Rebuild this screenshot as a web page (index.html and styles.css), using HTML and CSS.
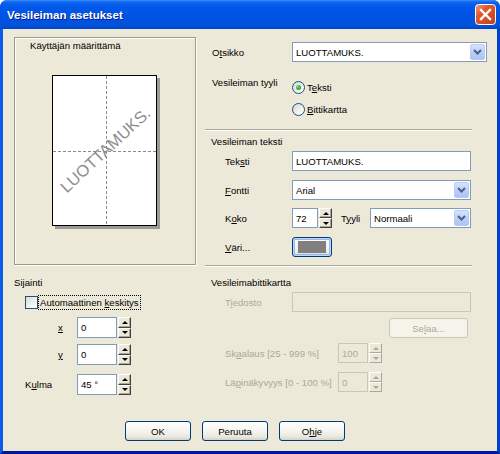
FILE: index.html
```html
<!DOCTYPE html>
<html lang="fi">
<head>
    <meta charset="UTF-8">
    <title>Vesileiman asetukset</title>
    <link rel="stylesheet" href="styles.css">
</head>
<body>

<div class="window">
    <div class="titlebar">
        <span class="title">Vesileiman asetukset</span>
        <button class="close" type="button" aria-label="Sulje">
            <svg width="21" height="21" viewBox="0 0 21 21">
                <defs>
                    <linearGradient id="closeBg" x1="0" y1="0" x2="1" y2="1">
                        <stop offset="0" stop-color="#f0a084"/>
                        <stop offset="0.35" stop-color="#e3582f"/>
                        <stop offset="1" stop-color="#c4401b"/>
                    </linearGradient>
                </defs>
                <rect x="0.5" y="0.5" width="20" height="20" rx="3" fill="url(#closeBg)" stroke="#fff"/>
                <path d="M6 6 L15 15 M15 6 L6 15" stroke="#fff" stroke-width="2.4" stroke-linecap="square"/>
            </svg>
        </button>
    </div>

    <div class="dialog">
        <div class="columns">
            <div class="left">
                <div class="preview">
                    <p class="preview-caption">Käyttäjän määrittämä</p>
                    <div class="paper">
                        <span class="mark">LUOTTAMUKS.</span>
                    </div>
                </div>

                <p class="group-title">Sijainti</p>
                <div class="check-row">
                    <span class="checkbox"></span>
                    <span class="focus">Automaattinen <u>k</u>eskitys</span>
                </div>
                <div class="pos-row first">
                    <span class="pos-label short"><u>x</u></span>
                    <div class="spin">
                        <input type="text" value="0">
                        <span class="spin-btns"><span class="up"></span><span class="down"></span></span>
                    </div>
                </div>
                <div class="pos-row second">
                    <span class="pos-label short"><u>y</u></span>
                    <div class="spin">
                        <input type="text" value="0">
                        <span class="spin-btns"><span class="up"></span><span class="down"></span></span>
                    </div>
                </div>
                <div class="pos-row third">
                    <span class="pos-label">K<u>u</u>lma</span>
                    <div class="spin">
                        <input type="text" value="45 °">
                        <span class="spin-btns"><span class="up"></span><span class="down"></span></span>
                    </div>
                </div>
            </div>

            <div class="right">
                <div class="row otsikko">
                    <span class="lbl top">O<u>t</u>sikko</span>
                    <div class="combo wide">
                        <span class="value">LUOTTAMUKS.</span>
                        <span class="arrow"><svg width="9" height="6" viewBox="0 0 9 6"><path d="M1 1 L4.5 4.5 L8 1" fill="none" stroke="#4d6185" stroke-width="2"/></svg></span>
                    </div>
                </div>

                <div class="style-block">
                    <span class="lbl top">Vesileiman tyyli</span>
                    <div class="radios">
                        <div class="radio-row"><span class="radio checked"></span><span>T<u>e</u>ksti</span></div>
                        <div class="radio-row"><span class="radio"></span><span><u>B</u>ittikartta</span></div>
                    </div>
                </div>

                <div class="sep first-sep"></div>

                <p class="heading">Vesileiman teksti</p>
                <div class="row first-field">
                    <span class="lbl">Tek<u>s</u>ti</span>
                    <input class="text" type="text" value="LUOTTAMUKS.">
                </div>
                <div class="row fontti">
                    <span class="lbl"><u>F</u>ontti</span>
                    <div class="combo">
                        <span class="value">Arial</span>
                        <span class="arrow"><svg width="9" height="6" viewBox="0 0 9 6"><path d="M1 1 L4.5 4.5 L8 1" fill="none" stroke="#4d6185" stroke-width="2"/></svg></span>
                    </div>
                </div>
                <div class="row koko">
                    <span class="lbl">K<u>o</u>ko</span>
                    <div class="spin">
                        <input class="size" type="text" value="72">
                        <span class="spin-btns"><span class="up"></span><span class="down"></span></span>
                    </div>
                    <span class="tyyli-lbl">T<u>y</u>yli</span>
                    <div class="combo narrow">
                        <span class="value">Normaali</span>
                        <span class="arrow"><svg width="9" height="6" viewBox="0 0 9 6"><path d="M1 1 L4.5 4.5 L8 1" fill="none" stroke="#4d6185" stroke-width="2"/></svg></span>
                    </div>
                </div>
                <div class="row vari">
                    <span class="lbl"><u>V</u>äri...</span>
                    <button class="btn color-btn" type="button"><span class="swatch"></span></button>
                </div>

                <div class="sep second-sep"></div>

                <p class="heading bitmap-heading">Vesileimabittikartta</p>
                <div class="row first-field disabled">
                    <span class="lbl">T<u>i</u>edosto</span>
                    <input class="text" type="text" value="" disabled>
                </div>
                <div class="row browse">
                    <button class="btn browse-btn" type="button" disabled>Se<u>l</u>aa...</button>
                </div>
                <div class="row disabled scale">
                    <span class="lbl long">Sk<u>a</u>alaus [25 - 999 %]</span>
                    <div class="spin off">
                        <input class="num" type="text" value="100" disabled>
                        <span class="spin-btns"><span class="up"></span><span class="down"></span></span>
                    </div>
                </div>
                <div class="row disabled opacity">
                    <span class="lbl long">Lä<u>p</u>inäkyvyys [0 - 100 %]</span>
                    <div class="spin off">
                        <input class="num" type="text" value="0" disabled>
                        <span class="spin-btns"><span class="up"></span><span class="down"></span></span>
                    </div>
                </div>
            </div>
        </div>

        <div class="buttons">
            <button class="btn" type="button">OK</button>
            <button class="btn" type="button">Peruuta</button>
            <button class="btn" type="button">O<u>h</u>je</button>
        </div>
    </div>
</div>

</body>
</html>
```

FILE: styles.css
```css
* {
    box-sizing: border-box;
}
html, body {
    margin: 0;
    padding: 0;
    background: #fff;
}
body {
    font-family: 'Liberation Sans', Arial, sans-serif;
    font-size: 9.6px;
    color: #000;
}
p {
    margin: 0;
}
input, button {
    font-family: inherit;
    font-size: 9.6px;
    color: #000;
    margin: 0;
}

.window {
    width: 500px;
    height: 454px;
    display: flex;
    flex-direction: column;
    border-radius: 7px 7px 0 0;
    overflow: hidden;
    background: #0054e3;
}
.titlebar {
    height: 29px;
    flex: none;
    display: flex;
    align-items: center;
    justify-content: space-between;
    padding: 0 4px 0 7px;
    background: linear-gradient(#3d8ffd 0, #0f66f0 2px, #0059ea 6px, #0054e3 50%, #0052dd 85%, #0047c9 100%);
}
.title {
    color: #fff;
    font-weight: bold;
    font-size: 11.5px;
    text-shadow: 1px 1px #0b1f8c;
}
.close {
    width: 21px;
    height: 21px;
    padding: 0;
    border: none;
    background: none;
    display: block;
}
.close svg {
    display: block;
}

.dialog {
    flex: 1;
    background: #ece9d8;
    border-left: 3px solid #0b5ce8;
    border-right: 3px solid #0041cc;
    border-bottom: 3px solid #00169f;
    padding: 8px 10px 0 11px;
}
.columns {
    display: grid;
    grid-template-columns: 182px 282px;
    column-gap: 9px;
    align-items: start;
}

/* preview */
.preview {
    height: 228px;
    border: 1px solid #9d9a8b;
    box-shadow: inset 1px 1px 0 #fff, 1px 1px 0 #fff;
    padding-top: 2px;
}
.preview-caption {
    line-height: 12px;
    padding-left: 15px;
}
.paper {
    position: relative;
    width: 105px;
    height: 151px;
    margin: 23px 0 0 37px;
    background: #fff;
    border: 1px solid #000;
    box-shadow: 3px 3px 0 #9c9a94;
    overflow: hidden;
}
.paper::before {
    content: '';
    position: absolute;
    left: 53px;
    top: 0;
    bottom: 0;
    width: 1px;
    background: repeating-linear-gradient(to bottom, #8a8a8a 0 3px, transparent 3px 5px);
}
.paper::after {
    content: '';
    position: absolute;
    top: 75px;
    left: 0;
    right: 0;
    height: 1px;
    background: repeating-linear-gradient(to right, #8a8a8a 0 3px, transparent 3px 5px);
}
.mark {
    position: absolute;
    left: 50%;
    top: 50%;
    z-index: 1;
    font-size: 16.5px;
    line-height: 16px;
    color: #8c8c8c;
    white-space: nowrap;
    transform: translate(-50%, -58%) rotate(-43deg);
}

/* position group */
.group-title {
    line-height: 12px;
    margin-top: 12px;
}
.check-row {
    display: flex;
    align-items: center;
    height: 15px;
    margin-top: 6px;
    padding-left: 11px;
}
.checkbox {
    width: 13px;
    height: 13px;
    border: 1px solid #1c5180;
    background: linear-gradient(135deg, #dcdcd5, #f6f6f3 70%, #fff);
}
.focus {
    margin-left: 1px;
    padding: 0 1px;
    line-height: 13px;
    outline: 1px dotted #000;
}
.pos-row {
    display: flex;
    align-items: center;
    height: 21px;
}
.pos-row.first {
    margin-top: 7px;
}
.pos-row.second {
    margin-top: 6px;
}
.pos-row.third {
    margin-top: 9px;
}
.pos-label {
    width: 63px;
    padding-left: 11px;
}
.pos-label.short {
    padding-left: 44px;
}
.pos-row input {
    width: 40px;
    height: 21px;
}

/* shared controls */
.spin {
    display: flex;
    gap: 1px;
    height: 100%;
}
.spin input,
.text {
    border: 1px solid #7f9db9;
    background: #fff;
    padding: 0 3px;
    outline: none;
}
.spin-btns {
    width: 13px;
    display: flex;
    flex-direction: column;
}
.spin-btns span {
    flex: 1;
    display: flex;
    align-items: center;
    justify-content: center;
    background: #ece9d8;
    border: 1px solid;
    border-color: #fff #404040 #404040 #fff;
    box-shadow: inset -1px -1px 0 #aca899;
}
.spin-btns .up::before,
.spin-btns .down::before {
    content: '';
    border-left: 3px solid transparent;
    border-right: 3px solid transparent;
}
.spin-btns .up::before {
    border-bottom: 3px solid #000;
}
.spin-btns .down::before {
    border-top: 3px solid #000;
}
.spin.off .spin-btns span {
    border-color: #fff #aca899 #aca899 #fff;
    box-shadow: none;
}
.spin.off .up::before {
    border-bottom-color: #aca899;
}
.spin.off .down::before {
    border-top-color: #aca899;
}

.combo {
    display: flex;
    align-items: center;
    width: 179px;
    height: 100%;
    border: 1px solid #7f9db9;
    background: #fff;
    padding: 1px;
}
.combo.wide {
    width: 195px;
}
.combo.narrow {
    width: 101px;
}
.combo .value {
    flex: 1;
    padding-left: 2px;
}
.combo .arrow {
    width: 15px;
    height: 100%;
    display: flex;
    align-items: center;
    justify-content: center;
    border: 1px solid #b9cbf3;
    border-radius: 2px;
    background: linear-gradient(#d7e3fd, #b8ccf7 60%, #aec4f4);
}
.combo .arrow svg {
    display: block;
}

.btn {
    height: 20px;
    width: 66px;
    padding: 0;
    border: 1px solid #003c74;
    border-radius: 3px;
    background: linear-gradient(#fff, #f4f3ee 55%, #e8e5da 85%, #d6d0c5);
}

/* right column */
.row {
    display: flex;
    align-items: center;
    height: 20px;
}
.lbl {
    width: 87px;
    flex: none;
    padding-left: 20px;
}
.lbl.top {
    padding-left: 7px;
}
.otsikko {
    margin-top: 5px;
}
.style-block {
    display: flex;
    margin-top: 14px;
}
.style-block .lbl {
    padding-top: 1px;
    line-height: 12px;
}
.radio-row {
    display: flex;
    align-items: center;
    gap: 2px;
    height: 22px;
}
.radio {
    width: 13px;
    height: 13px;
    border-radius: 50%;
    border: 1px solid #1c5180;
    background: linear-gradient(135deg, #d8d8d2, #f5f5f2 70%, #fff);
    display: flex;
    align-items: center;
    justify-content: center;
}
.radio.checked::before {
    content: '';
    width: 5px;
    height: 5px;
    border-radius: 50%;
    background: radial-gradient(circle at 35% 35%, #7ed97e, #21a121 70%);
}
.sep {
    width: 267px;
    height: 2px;
    border-top: 1px solid #aca899;
    border-bottom: 1px solid #fff;
}
.first-sep {
    margin-top: 9px;
}
.second-sep {
    margin-top: 8px;
}
.heading {
    line-height: 12px;
    margin-top: 5px;
    padding-left: 6px;
}
.bitmap-heading {
    margin-top: 10px;
}
.first-field {
    margin-top: 3px;
}
.text {
    width: 179px;
    height: 20px;
}
.fontti {
    margin-top: 9px;
}
.koko {
    margin-top: 8px;
}
.size {
    width: 26px;
    height: 20px;
}
.tyyli-lbl {
    width: 29px;
    margin-left: 9px;
}
.vari {
    margin-top: 9px;
}
.color-btn {
    width: 40px;
    display: flex;
    align-items: center;
    justify-content: center;
    box-shadow: inset 0 0 0 1px #c1d6f8, inset 0 0 0 2px #98b6ee;
}
.swatch {
    width: 28px;
    height: 12px;
    background: #808080;
}

.disabled {
    color: #aca899;
}
.disabled input,
.spin.off input {
    background: #ece9d8;
    border-color: #c9c7ba;
    color: #aca899;
}
.browse {
    margin-top: 6px;
    padding-left: 184px;
}
.browse-btn {
    width: 79px;
    color: #aca899;
    border-color: #c9c7ba;
    background: #f5f4ea;
}
.scale {
    margin-top: 5px;
}
.opacity {
    margin-top: 9px;
}
.lbl.long {
    width: 133px;
}
.num {
    width: 30px;
    height: 20px;
}

/* bottom buttons */
.buttons {
    display: flex;
    gap: 11px;
    margin-top: 26px;
    padding-left: 111px;
}
```
